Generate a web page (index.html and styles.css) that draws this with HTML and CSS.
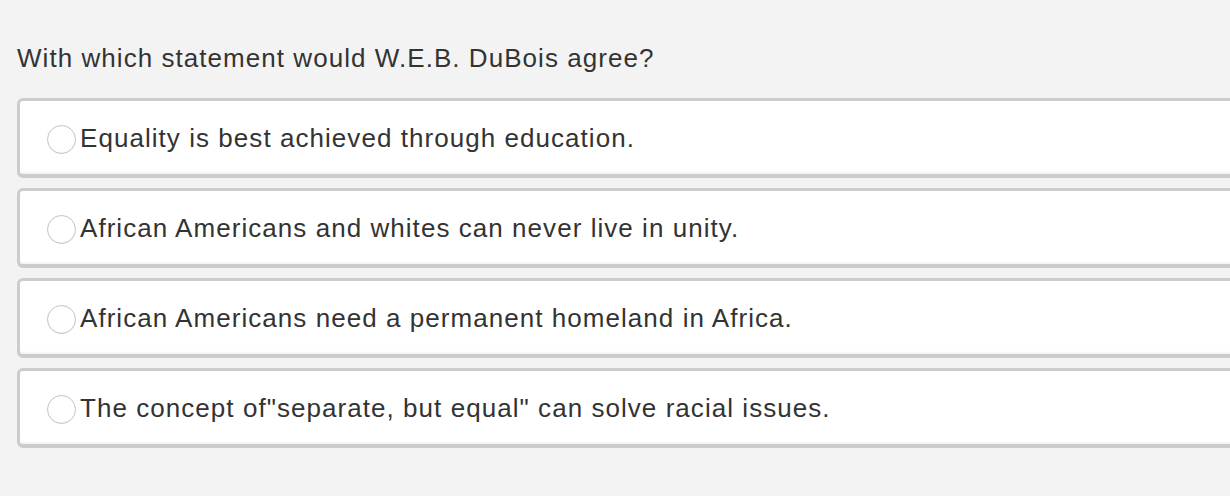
FILE: index.html
```html
<!DOCTYPE html>
<html>
<head>
<meta charset="utf-8">
<link rel="stylesheet" href="styles.css">
</head>
<body>
<div class="question">
  <p class="prompt">With which statement would W.E.B. DuBois agree?</p>
  <div class="options">
    <label class="option"><span class="radio"></span><span class="label">Equality is best achieved through education.</span></label>
    <label class="option"><span class="radio"></span><span class="label">African Americans and whites can never live in unity.</span></label>
    <label class="option"><span class="radio"></span><span class="label">African Americans need a permanent homeland in Africa.</span></label>
    <label class="option"><span class="radio"></span><span class="label">The concept of"separate, but equal" can solve racial issues.</span></label>
  </div>
</div>
</body>
</html>
```
FILE: styles.css
```css
html, body {
  margin: 0;
  padding: 0;
  overflow: hidden;
  background: #f3f3f3;
}
body {
  font-family: "Liberation Sans", Arial, sans-serif;
  color: #333;
  width: 1230px;
  height: 496px;
}
.question {
  padding: 43px 0 0 17px;
}
.prompt {
  margin: 0;
  font-size: 26px;
  line-height: 30px;
  letter-spacing: 1.05px;
  color: #333;
}
.options {
  margin-top: 25px;
  display: flex;
  flex-direction: column;
  gap: 10px;
}
.option {
  box-sizing: border-box;
  width: 1240px;
  height: 80px;
  background: #fff;
  border: 3px solid #cccccc;
  border-bottom-width: 4px;
  border-radius: 6px;
  display: flex;
  align-items: center;
  padding-left: 27px;
  box-shadow: inset 0 -3px 3px -2px #ececec;
}
.radio {
  box-sizing: border-box;
  width: 29px;
  height: 29px;
  border-radius: 50%;
  border: 1px solid #c2c2c2;
  background: #fff;
  box-shadow: inset 0 -1px 1px rgba(0,0,0,0.04);
  flex: none;
  margin-top: 3px;
}
.label {
  font-size: 26px;
  line-height: 30px;
  letter-spacing: 1.05px;
  color: #333;
  margin-left: 4px;
}
```
